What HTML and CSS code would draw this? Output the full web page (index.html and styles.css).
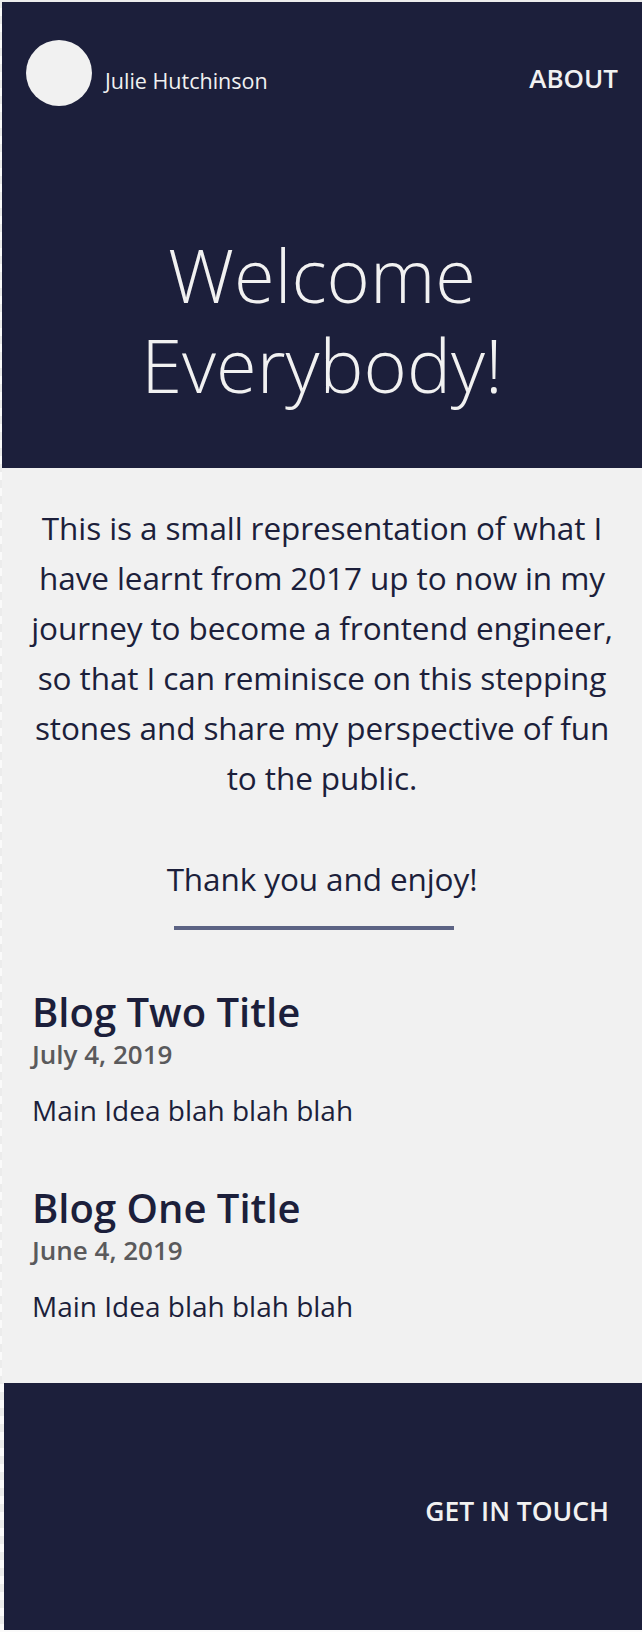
FILE: index.html
```html
<!DOCTYPE html>
<html lang="en">
<head>
<meta charset="utf-8">
<title>Julie Hutchinson</title>
<link rel="stylesheet" href="styles.css">
</head>
<body>
<div class="page">
  <header class="hero">
    <nav class="nav">
      <a class="brand" href="#">
        <span class="avatar"></span>
        <span class="brand-name">Julie Hutchinson</span>
      </a>
      <a class="nav-link" href="#">ABOUT</a>
    </nav>
    <h1 class="hero-title"><span class="hero-line">Welcome</span><span class="hero-line">Everybody!</span></h1>
  </header>

  <main class="content">
    <section class="intro">
      <p class="intro-text">This is a small representation of what I have learnt from 2017 up to now in my journey to become a frontend engineer, so that I can reminisce on this stepping stones and share my perspective of fun to the public.</p>
      <p class="intro-text intro-thanks">Thank you and enjoy!</p>
      <hr class="divider">
    </section>

    <section class="posts">
      <article class="post">
        <h2 class="post-title">Blog Two Title</h2>
        <p class="post-date">July 4, 2019</p>
        <p class="post-summary">Main Idea blah blah blah</p>
      </article>
      <article class="post">
        <h2 class="post-title">Blog One Title</h2>
        <p class="post-date">June 4, 2019</p>
        <p class="post-summary">Main Idea blah blah blah</p>
      </article>
    </section>
  </main>

  <footer class="footer">
    <a class="footer-link" href="#">GET IN TOUCH</a>
  </footer>
</div>
</body>
</html>
```

FILE: styles.css
```css
html {
  background-color: #f1f1f1;
  background-image: repeating-linear-gradient(0deg, #fafafa 0 8px, #ececec 8px 16px);
  min-height: 100%;
}

body {
  margin: 0;
  padding: 2px 0 0 2px;
  font-family: "Open Sans", "Liberation Sans", sans-serif;
  color: #1c1f3b;
}

a {
  color: inherit;
  text-decoration: none;
}

.hero {
  background: #1c1f3b;
  color: #f1f1f1;
  height: 466px;
  box-sizing: border-box;
  padding-top: 38px;
}

.nav {
  display: flex;
  align-items: center;
  justify-content: space-between;
  height: 66px;
  padding: 0 24px;
}

.brand {
  display: flex;
  align-items: center;
  gap: 13px;
}

.avatar {
  width: 66px;
  height: 66px;
  border-radius: 50%;
  background: #f1f1f1;
  flex: none;
}

.brand-name {
  font-size: 21.5px;
  font-weight: 400;
  margin-top: 15px;
}

.nav-link {
  font-size: 26px;
  font-weight: 600;
  margin-top: 10px;
}

.hero-title {
  margin: 124px 0 0;
  text-align: center;
  font-size: 74px;
  font-weight: 300;
  line-height: 90px;
}

.hero-line {
  display: block;
}

.content {
  background: #f1f1f1;
  padding: 35px 16px 60px;
}

.intro-text {
  margin: 0;
  text-align: center;
  font-size: 31.5px;
  line-height: 50px;
  letter-spacing: -0.1px;
}

.intro-thanks {
  margin-top: 51px;
}

.divider {
  width: 280px;
  height: 4px;
  border: 0;
  margin: 22px 0 0 156px;
  background: #5c6384;
}

.posts {
  margin-top: 58px;
  padding: 0 14px;
}

.post + .post {
  margin-top: 57px;
}

.post-title {
  margin: 0;
  font-size: 40px;
  font-weight: 600;
  line-height: 47px;
}

.post-date {
  margin: 4px 0 0;
  font-size: 26px;
  font-weight: 600;
  line-height: 31px;
  color: #5a5a5c;
}

.post-summary {
  margin: 24px 0 0;
  font-size: 28px;
  line-height: 33px;
}

.footer {
  margin-left: 2px;
  height: 247px;
  box-sizing: border-box;
  padding: 110px 33px 0;
  background: #1c1f3b;
  color: #f1f1f1;
  text-align: right;
}

.footer-link {
  font-size: 26.5px;
  font-weight: 600;
}
```
